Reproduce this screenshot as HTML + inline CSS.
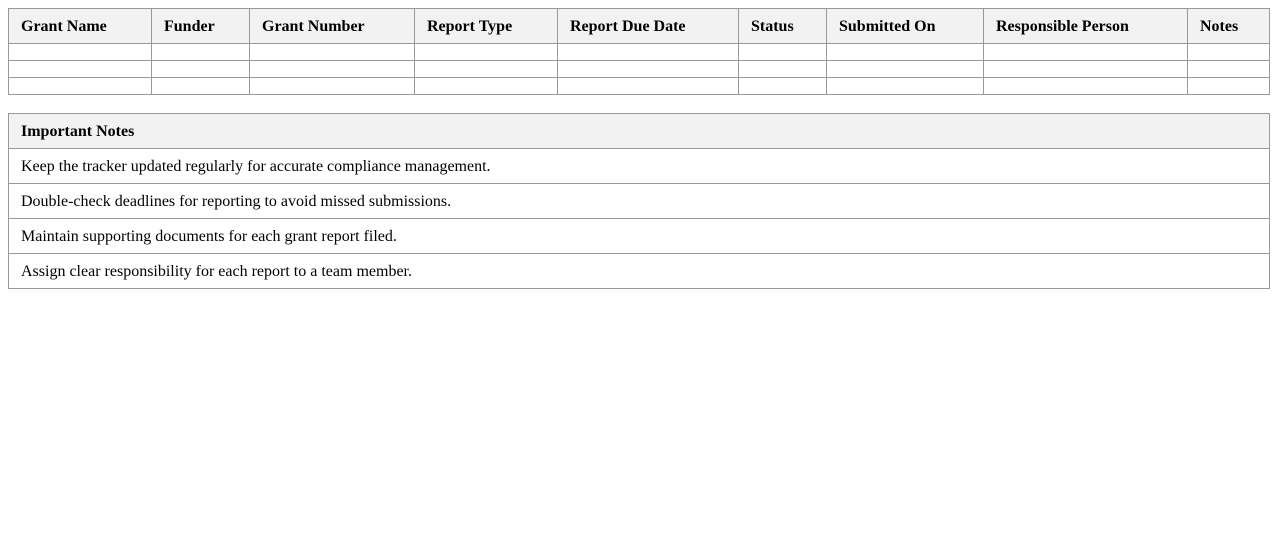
<!DOCTYPE html>
<html><head><meta charset="utf-8"><style>
body{margin:8px;font-family:"Liberation Serif",serif;font-size:16px;color:#000;background:#fff}
table{border-collapse:collapse;width:1261px;table-layout:fixed}
td,th{border:1px solid #999;padding:9px 12px 7px;text-align:left;line-height:18px}
th{background:#f2f2f2;font-weight:bold}
tr.e td{padding:0;height:16px}
.t2{margin-top:18px;width:1262px}
</style></head><body>
<table>
<colgroup><col style="width:143px"><col style="width:98px"><col style="width:165px"><col style="width:143px"><col style="width:181px"><col style="width:88px"><col style="width:157px"><col style="width:204px"><col style="width:82px"></colgroup>
<tr><th>Grant Name</th><th>Funder</th><th>Grant Number</th><th>Report Type</th><th>Report Due Date</th><th>Status</th><th>Submitted On</th><th>Responsible Person</th><th>Notes</th></tr>
<tr class="e"><td></td><td></td><td></td><td></td><td></td><td></td><td></td><td></td><td></td></tr>
<tr class="e"><td></td><td></td><td></td><td></td><td></td><td></td><td></td><td></td><td></td></tr>
<tr class="e"><td></td><td></td><td></td><td></td><td></td><td></td><td></td><td></td><td></td></tr>
</table>
<table class="t2">
<tr><th>Important Notes</th></tr>
<tr><td>Keep the tracker updated regularly for accurate compliance management.</td></tr>
<tr><td>Double-check deadlines for reporting to avoid missed submissions.</td></tr>
<tr><td>Maintain supporting documents for each grant report filed.</td></tr>
<tr><td>Assign clear responsibility for each report to a team member.</td></tr>
</table>
</body></html>
